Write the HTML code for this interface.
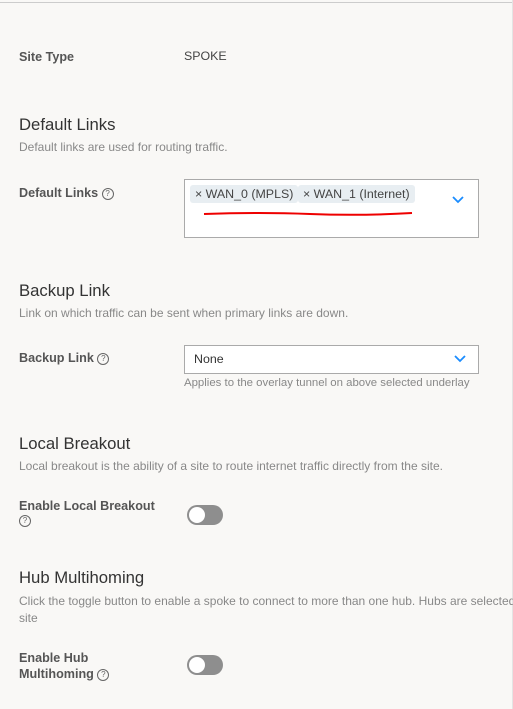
<!DOCTYPE html>
<html><head><style>
body{margin:0;width:513px;height:709px;background:#f9f8f6;font-family:"Liberation Sans",sans-serif;position:relative;overflow:hidden;color:#333}
.a{position:absolute;white-space:nowrap}
.lbl{font-size:12.6px;font-weight:bold;color:#555}
.h{font-size:16.7px;color:#333}
.d{font-size:12px;color:#888}
.q{display:inline-block;width:10px;height:10px;border:1px solid #666;border-radius:50%;font-size:8px;line-height:10px;text-align:center;font-weight:normal;color:#666;vertical-align:1px}
.box{position:absolute;background:#fff;border:1px solid #aaa;box-sizing:border-box}
.tag{position:absolute;top:5px;height:18px;background:#e8eef2;border-radius:3px;font-size:12.4px;color:#444;line-height:18px;padding:0 5px}
.tg{position:absolute;width:36px;height:20px;border-radius:10px;background:#8e8e8e}
.tg:after{content:"";position:absolute;left:2px;top:2px;width:16px;height:16px;border-radius:50%;background:#fff}
</style></head><body>
<div class="a" style="left:0;top:2px;width:513px;height:1px;background:#ccc"></div>
<div class="a" style="left:512px;top:0;width:1px;height:709px;background:#e4e4e4"></div>
<div class="a lbl" style="left:19px;top:50px">Site Type</div>
<div class="a" style="left:184px;top:49px;font-size:12.4px;color:#444">SPOKE</div>
<div class="a h" style="left:19px;top:115px">Default Links</div>
<div class="a d" style="left:19px;top:140px">Default links are used for routing traffic.</div>
<div class="a lbl" style="left:19px;top:186px">Default Links <span class="q">?</span></div>
<div class="box" style="left:184px;top:179px;width:295px;height:59px">
<div class="tag" style="left:5px">× WAN_0 (MPLS)</div>
<div class="tag" style="left:113px">× WAN_1 (Internet)</div>
<svg style="position:absolute;left:266px;top:15px" width="14" height="10"><path d="M2 2l5 5 5-5" stroke="#1a8cff" stroke-width="1.8" fill="none"/></svg>
</div>
<svg class="a" style="left:200px;top:208px" width="215" height="12"><path d="M4 6 Q60 4 110 6 T212 5" stroke="#e00" stroke-width="2" fill="none"/></svg>
<div class="a h" style="left:19px;top:281px">Backup Link</div>
<div class="a d" style="left:19px;top:306px">Link on which traffic can be sent when primary links are down.</div>
<div class="a lbl" style="left:19px;top:351px">Backup Link <span class="q">?</span></div>
<div class="box" style="left:184px;top:345px;width:295px;height:29px">
<div class="a" style="left:9px;top:6px;font-size:12.4px;color:#333">None</div>
<svg style="position:absolute;left:268px;top:8px" width="14" height="10"><path d="M2 2l5 5 5-5" stroke="#1a8cff" stroke-width="1.8" fill="none"/></svg>
</div>
<div class="a d" style="left:184px;top:377px;font-size:11.4px">Applies to the overlay tunnel on above selected underlay</div>
<div class="a h" style="left:19px;top:434px">Local Breakout</div>
<div class="a d" style="left:19px;top:459px">Local breakout is the ability of a site to route internet traffic directly from the site.</div>
<div class="a lbl" style="left:19px;top:499px">Enable Local Breakout<br><span class="q">?</span></div>
<div class="tg" style="left:187px;top:505px"></div>
<div class="a h" style="left:19px;top:568px">Hub Multihoming</div>
<div class="a d" style="left:19px;top:593px;line-height:17px">Click the toggle button to enable a spoke to connect to more than one hub. Hubs are selected<br>site</div>
<div class="a lbl" style="left:19px;top:650px;line-height:16px">Enable Hub<br>Multihoming <span class="q">?</span></div>
<div class="tg" style="left:187px;top:655px"></div>
</body></html>
